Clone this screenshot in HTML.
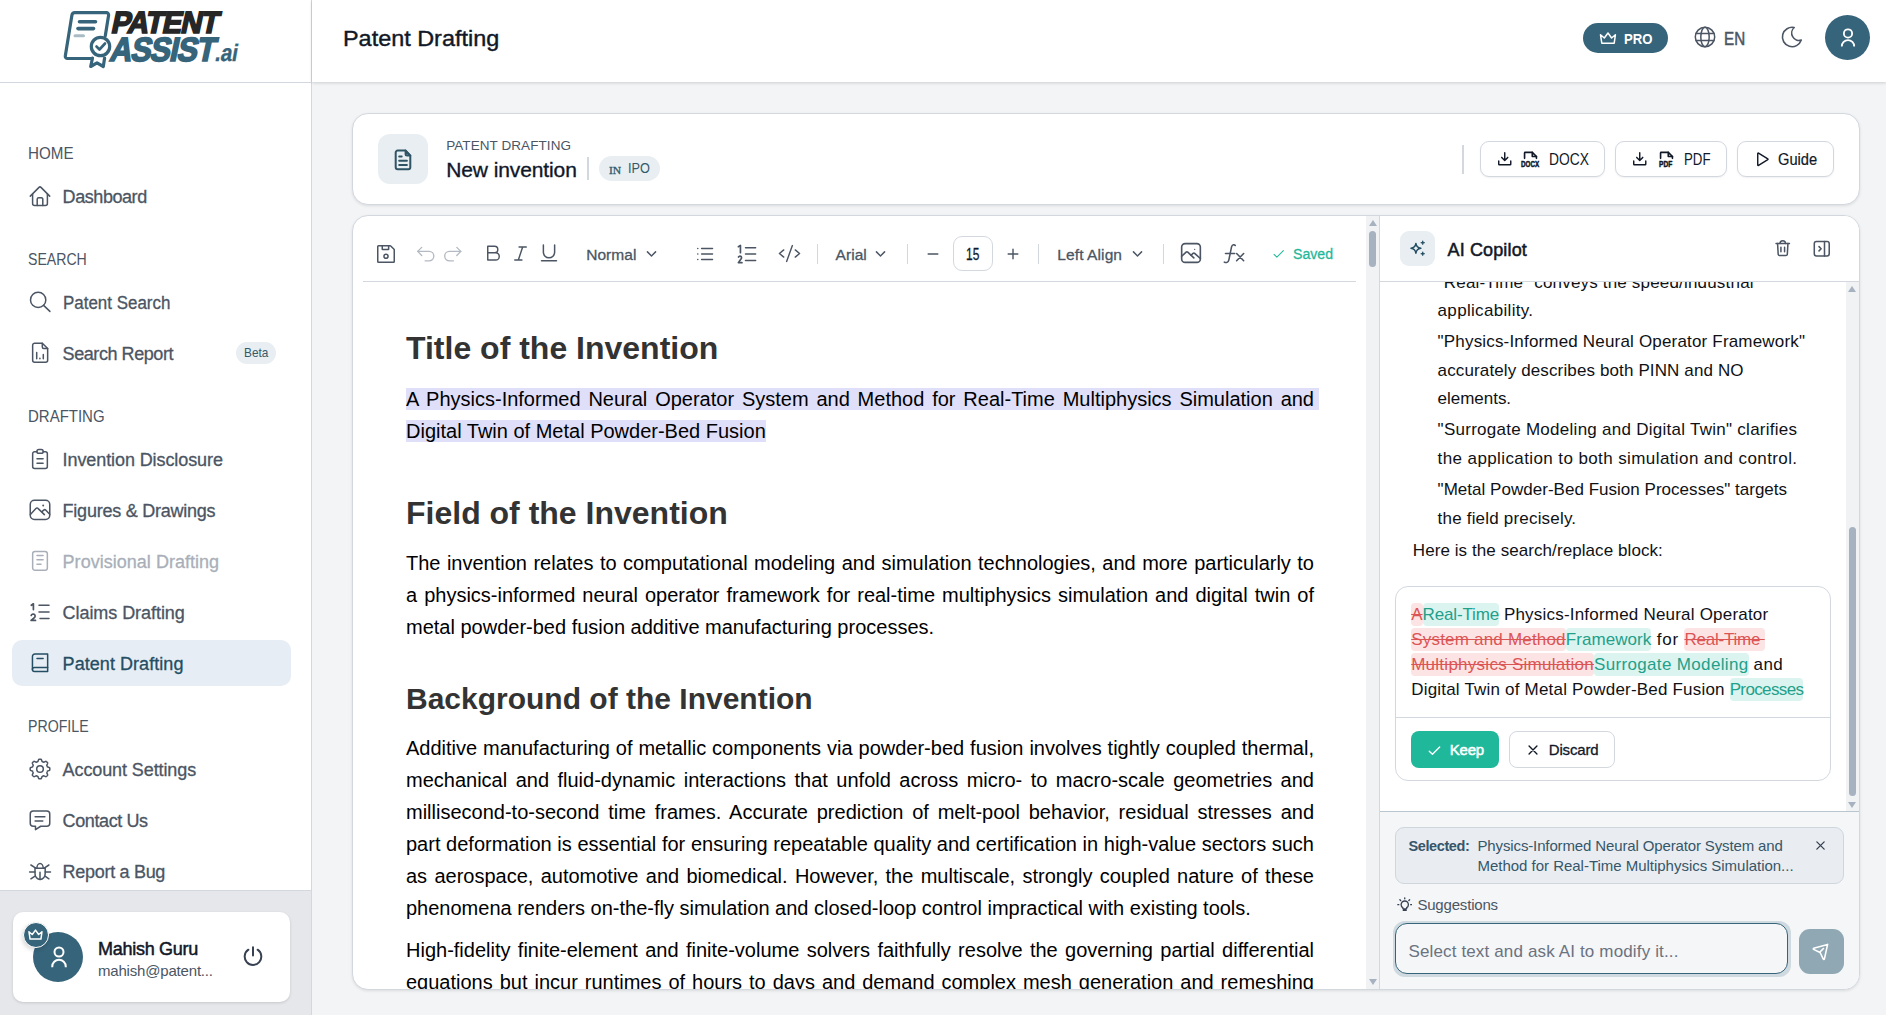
<!DOCTYPE html>
<html><head><meta charset="utf-8">
<style>
*{box-sizing:border-box;margin:0;padding:0}
html,body{width:1886px;height:1015px;overflow:hidden;background:#f3f4f6;font-family:"Liberation Sans",sans-serif;color:#111827}
.abs{position:absolute}
svg{display:block}
.i24{fill:none;stroke:currentColor;stroke-width:1.5;stroke-linecap:round;stroke-linejoin:round}
.ic{fill:none;stroke:currentColor;stroke-width:14;stroke-linecap:round;stroke-linejoin:round}
.t{position:absolute;white-space:nowrap}
.md{-webkit-text-stroke:.3px currentColor}
.sb{-webkit-text-stroke:.5px currentColor}
/* sidebar */
#sb{position:absolute;left:0;top:0;width:312px;height:1015px;background:#fff;border-right:1px solid #d3d8df}
#sbtop{position:absolute;left:0;top:0;width:311px;height:83px;border-bottom:1px solid #d3d8df}
#sbfoot{position:absolute;left:0;top:890px;width:311px;height:125px;background:#e5e7eb;border-top:1px solid #d3d8df}
.sec{position:absolute;left:27.5px;font-size:16.2px;color:#4b5563;line-height:16px;white-space:nowrap}
.nav{position:absolute;left:12px;width:279px;height:46px;border-radius:10px;color:#4b5563;font-size:18px;line-height:46px}
.nav .t{left:50.6px;top:1px;-webkit-text-stroke:.3px currentColor}
.nav svg{position:absolute;left:16px;top:11px;width:24px;height:24px}
.nav.act{background:#e7edf4;color:#244e63}
.nav.dis{color:#a9afb8}
/* header */
#hd{position:absolute;left:312px;top:0;width:1574px;height:82px;background:#fff;box-shadow:0 1px 3px rgba(0,0,0,.16)}
.card{position:absolute;background:#fff;border:1px solid #d3d8df;border-radius:16px;box-shadow:0 1px 3px rgba(0,0,0,.10)}
.btn{position:absolute;height:36px;border:1px solid #d3d8df;border-radius:9px;background:#fff;box-shadow:0 1px 2px rgba(0,0,0,.06)}
.tb{color:#4b5563}
.vd{position:absolute;width:1px;background:#d3d8df}

#doc .h{left:0;width:907px;font-size:32px;line-height:40px;font-weight:bold;color:#333;white-space:nowrap;text-align:left}
#doc .p{left:0;width:908px}
.hl{background:#dfdff9}
.tri{width:0;height:0;border-left:4.500px solid transparent;border-right:4.500px solid transparent;margin-left:.5px}
.tri.up{border-bottom:6px solid #a7b2c1}
.tri.dn{border-top:6px solid #a7b2c1}

.dl{height:25px}
.dl span{display:inline-block;height:23px;line-height:23px;vertical-align:top;margin-top:1px;white-space:pre}
.del{background:#fce4e4;color:#dc5555;text-decoration:line-through;border-radius:4px}
.ins{background:#dcf4ef;color:#22a08a;border-radius:4px}
</style></head><body>
<!--SIDEBAR-->
<div id="sb">
 <div id="sbtop"><svg class="abs" style="left:60px;top:6px" width="190" height="68" viewBox="60 6 190 68">
  <g fill="none" stroke="#36647a" stroke-width="3.2" stroke-linejoin="round" stroke-linecap="round">
   <path d="M91 58.500H67.500a2.200 2.200 0 0 1-2.200-2.600l6.600-40.700a3 3 0 0 1 3-2.500h31.500a2.200 2.200 0 0 1 2.200 2.600l-3.300 20.500"/>
   <circle cx="100.500" cy="46.500" r="9.200"/>
   <path d="M92.500 58l-1.800 8.500 6.300-3.600 6.300 3.600 1.300-8.500"/>
  </g>
  <g fill="none" stroke="#36647a" stroke-linecap="round">
   <path d="M79.500 21.800H95.500" stroke-width="3.600"/><path d="M78 28.600H93.500" stroke-width="3.600"/><path d="M75 35.800H83.500" stroke-width="3" stroke="#a9bcc6"/>
   <path d="M96.500 46.500l3 3 5.500-6" stroke-width="2.600" stroke-linejoin="round"/>
  </g>
  <text x="0" y="0" transform="translate(110.300 33.400) skewX(-12) scale(.95 1)" font-family="Liberation Sans" font-weight="bold" font-size="30.600" fill="#262626" stroke="#262626" stroke-width="1.700" letter-spacing="-1">PATENT</text>
  <text x="0" y="0" transform="translate(108.700 61) skewX(-12) scale(.905 1)" font-family="Liberation Sans" font-weight="bold" font-size="33.600" fill="#36647a" stroke="#36647a" stroke-width="1.700" letter-spacing="-1">ASSIST</text>
  <text x="0" y="0" transform="translate(214.300 61.300) skewX(-10) scale(.86 1)" font-family="Liberation Sans" font-weight="bold" font-size="24" fill="#36647a" stroke="#36647a" stroke-width=".3" letter-spacing="-.3">.ai</text>
</svg></div>
 <div class="sec" style="transform:scaleX(0.9369);transform-origin:0 0;top:145px">HOME</div>
 <div class="sec" style="transform:scaleX(0.8715);transform-origin:0 0;top:251px">SEARCH</div>
 <div class="sec" style="transform:scaleX(0.9259);transform-origin:0 0;top:408px">DRAFTING</div>
 <div class="sec" style="transform:scaleX(0.8749);transform-origin:0 0;top:718px">PROFILE</div>
 <div class="nav" style="top:173px"><svg viewBox="0 0 24 24" class="i24"><path d="M2.300 12.100L11 3.400a1.420 1.420 0 0 1 2 0l8.700 8.700"/><path d="M4.600 10v9.600a2 2 0 0 0 2 2h10.800a2 2 0 0 0 2-2V10"/><path d="M9.200 21.500v-6.300a1.500 1.500 0 0 1 1.500-1.500h2.600a1.500 1.500 0 0 1 1.500 1.500v6.300"/></svg><span class="t" style="letter-spacing:-0.433px;">Dashboard</span></div>
 <div class="nav" style="top:279px"><svg viewBox="0 0 24 24" class="i24"><circle cx="10.150" cy="9.900" r="7.650"/><path d="M15.600 15.350L21.900 21.400"/></svg><span class="t" style="transform:scaleX(0.9415);transform-origin:0 0;">Patent Search</span></div>
 <div class="nav" style="top:330px"><svg viewBox="0 0 24 24" class="i24"><path d="M14.300 2.250H6.650a2 2 0 0 0-2 2v15a2 2 0 0 0 2 2h11a2 2 0 0 0 2-2V7.500z"/><path d="M14.300 2.250v3.750a1.500 1.500 0 0 0 1.500 1.500h3.850"/><path d="M8.700 11.600v6.100M11.900 17.200v.5M15.300 13.500v4.200"/></svg><span class="t" style="letter-spacing:-0.430px;">Search Report</span></div>
 <div class="nav" style="top:436px"><svg viewBox="0 0 24 24" class="i24"><path d="M8.900 4.650H6.650a2 2 0 0 0-2 2v12.800a2 2 0 0 0 2 2h10.700a2 2 0 0 0 2-2V6.650a2 2 0 0 0-2-2H15.200"/><rect x="8.900" y="2.450" width="6.300" height="3.900" rx="1.950"/><path d="M9 11.800h6.100M9 16.300h6.100"/></svg><span class="t" style="letter-spacing:-0.094px;">Invention Disclosure</span></div>
 <div class="nav" style="top:487px"><svg viewBox="0 0 24 24" class="i24"><rect x="2.250" y="2.250" width="19.500" height="19.300" rx="4.200"/><circle cx="15.200" cy="7.500" r=".95" fill="currentColor" stroke="none"/><path d="M2.400 16.400l5.500-5.800a1.600 1.600 0 0 1 2.300 0l6.200 6"/><path d="M14 13.600l1.700-1.500a1.600 1.600 0 0 1 2.200.1l3.800 4"/></svg><span class="t" style="letter-spacing:-0.239px;">Figures &amp; Drawings</span></div>
 <div class="nav dis" style="top:538px"><svg viewBox="0 0 24 24" class="i24"><rect x="4.650" y="2.550" width="14.700" height="18.700" rx="2.300"/><path d="M9 6.400h6.100M9 10.800h6.100M9 15.200h4"/></svg><span class="t" style="letter-spacing:0.022px;">Provisional Drafting</span></div>
 <div class="nav" style="top:589px"><svg viewBox="0 0 24 24" class="i24"><path d="M11 5.300h10M11 12h10M12 18.400h9"/><path d="M3.300 5.300l2.100-1.500v5.800" stroke-width="1.700"/><path d="M3.200 15.500a2 2 0 1 1 3.500 1.800L3.100 20.400h4.400" stroke-width="1.700"/></svg><span class="t" style="letter-spacing:-0.059px;">Claims Drafting</span></div>
 <div class="nav act" style="top:640px"><svg viewBox="0 0 24 24" class="i24"><path d="M19.650 16.400V3.050H6.850a2.400 2.400 0 0 0-2.400 2.400v12.950"/><path d="M19.650 16.400H6.450a2 2 0 0 0 0 4.050h13.200z"/><path d="M9 7.600h6.100"/></svg><span class="t" style="letter-spacing:0.052px;">Patent Drafting</span></div>
 <div class="nav" style="top:746px"><svg viewBox="0 0 24 24" class="i24"><circle cx="12" cy="12" r="3.300"/><path d="M21.80 12.00 L21.80 12.26 L21.79 12.51 L21.77 12.77 L21.75 13.02 L21.56 13.26 L21.19 13.46 L20.79 13.63 L20.38 13.78 L19.97 13.91 L19.59 14.03 L19.38 14.19 L19.32 14.38 L19.26 14.57 L19.19 14.76 L19.11 14.95 L19.03 15.13 L18.95 15.31 L18.86 15.50 L18.77 15.67 L18.80 15.93 L18.99 16.28 L19.18 16.66 L19.36 17.06 L19.53 17.47 L19.65 17.87 L19.62 18.17 L19.45 18.36 L19.28 18.56 L19.11 18.75 L18.93 18.93 L18.75 19.11 L18.56 19.28 L18.36 19.45 L18.17 19.62 L17.87 19.65 L17.47 19.53 L17.06 19.36 L16.66 19.18 L16.28 18.99 L15.93 18.80 L15.67 18.77 L15.50 18.86 L15.31 18.95 L15.13 19.03 L14.95 19.11 L14.76 19.19 L14.57 19.26 L14.38 19.32 L14.19 19.38 L14.03 19.59 L13.91 19.97 L13.78 20.38 L13.63 20.79 L13.46 21.19 L13.26 21.56 L13.02 21.75 L12.77 21.77 L12.51 21.79 L12.26 21.80 L12.00 21.80 L11.74 21.80 L11.49 21.79 L11.23 21.77 L10.98 21.75 L10.74 21.56 L10.54 21.19 L10.37 20.79 L10.22 20.38 L10.09 19.97 L9.97 19.59 L9.81 19.38 L9.62 19.32 L9.43 19.26 L9.24 19.19 L9.05 19.11 L8.87 19.03 L8.69 18.95 L8.50 18.86 L8.33 18.77 L8.07 18.80 L7.72 18.99 L7.34 19.18 L6.94 19.36 L6.53 19.53 L6.13 19.65 L5.83 19.62 L5.64 19.45 L5.44 19.28 L5.25 19.11 L5.07 18.93 L4.89 18.75 L4.72 18.56 L4.55 18.36 L4.38 18.17 L4.35 17.87 L4.47 17.47 L4.64 17.06 L4.82 16.66 L5.01 16.28 L5.20 15.93 L5.23 15.67 L5.14 15.50 L5.05 15.31 L4.97 15.13 L4.89 14.95 L4.81 14.76 L4.74 14.57 L4.68 14.38 L4.62 14.19 L4.41 14.03 L4.03 13.91 L3.62 13.78 L3.21 13.63 L2.81 13.46 L2.44 13.26 L2.25 13.02 L2.23 12.77 L2.21 12.51 L2.20 12.26 L2.20 12.00 L2.20 11.74 L2.21 11.49 L2.23 11.23 L2.25 10.98 L2.44 10.74 L2.81 10.54 L3.21 10.37 L3.62 10.22 L4.03 10.09 L4.41 9.97 L4.62 9.81 L4.68 9.62 L4.74 9.43 L4.81 9.24 L4.89 9.05 L4.97 8.87 L5.05 8.69 L5.14 8.50 L5.23 8.33 L5.20 8.07 L5.01 7.72 L4.82 7.34 L4.64 6.94 L4.47 6.53 L4.35 6.13 L4.38 5.83 L4.55 5.64 L4.72 5.44 L4.89 5.25 L5.07 5.07 L5.25 4.89 L5.44 4.72 L5.64 4.55 L5.83 4.38 L6.13 4.35 L6.53 4.47 L6.94 4.64 L7.34 4.82 L7.72 5.01 L8.07 5.20 L8.33 5.23 L8.50 5.14 L8.69 5.05 L8.87 4.97 L9.05 4.89 L9.24 4.81 L9.43 4.74 L9.62 4.68 L9.81 4.62 L9.97 4.41 L10.09 4.03 L10.22 3.62 L10.37 3.21 L10.54 2.81 L10.74 2.44 L10.98 2.25 L11.23 2.23 L11.49 2.21 L11.74 2.20 L12.00 2.20 L12.26 2.20 L12.51 2.21 L12.77 2.23 L13.02 2.25 L13.26 2.44 L13.46 2.81 L13.63 3.21 L13.78 3.62 L13.91 4.03 L14.03 4.41 L14.19 4.62 L14.38 4.68 L14.57 4.74 L14.76 4.81 L14.95 4.89 L15.13 4.97 L15.31 5.05 L15.50 5.14 L15.67 5.23 L15.93 5.20 L16.28 5.01 L16.66 4.82 L17.06 4.64 L17.47 4.47 L17.87 4.35 L18.17 4.38 L18.36 4.55 L18.56 4.72 L18.75 4.89 L18.93 5.07 L19.11 5.25 L19.28 5.44 L19.45 5.64 L19.62 5.83 L19.65 6.13 L19.53 6.53 L19.36 6.94 L19.18 7.34 L18.99 7.72 L18.80 8.07 L18.77 8.33 L18.86 8.50 L18.95 8.69 L19.03 8.87 L19.11 9.05 L19.19 9.24 L19.26 9.43 L19.32 9.62 L19.38 9.81 L19.59 9.97 L19.97 10.09 L20.38 10.22 L20.79 10.37 L21.19 10.54 L21.56 10.74 L21.75 10.98 L21.77 11.23 L21.79 11.49 L21.80 11.74z"/></svg><span class="t" style="letter-spacing:-0.100px;">Account Settings</span></div>
 <div class="nav" style="top:797px"><svg viewBox="0 0 24 24" class="i24"><path d="M7.500 18.250H5.250a3 3 0 0 1-3-3V6.050a3 3 0 0 1 3-3h13.500a3 3 0 0 1 3 3v9.200a3 3 0 0 1-3 3H12.700l-5.200 3.400z"/><path d="M7.100 8.700h9.800M7.100 12.900h7.700"/></svg><span class="t" style="letter-spacing:-0.394px;">Contact Us</span></div>
 <div class="nav" style="top:848px"><svg viewBox="0 0 24 24" class="i24"><g transform="translate(0 1)"><path d="M7 8.200h10.200v5.400a5.100 6 0 0 1-10.200 0z"/><path d="M8.900 8.200a3.150 4.600 0 0 1 6.300 0"/><path d="M1.600 11.900H7M17.200 11.900h5.300M2.900 5l4.500 2.800M20.900 5l-4.300 2.800M2.900 18.800l3.700-2.400M20.900 18.800l-3.500-2.400M12 12.300v7.200"/></g></svg><span class="t" style="letter-spacing:-0.298px;">Report a Bug</span></div>
 <div class="abs" style="left:236px;top:342px;width:40px;height:22px;border-radius:11px;background:#e8eef1;color:#35596b;font-size:13px;line-height:22px"><span class="t" style="transform:scaleX(0.9084);transform-origin:0 0;left:7.8px">Beta</span></div>
 <div id="sbfoot">
  <div class="abs" style="left:13px;top:21px;width:277px;height:90px;background:#fff;border-radius:10px;box-shadow:0 1px 3px rgba(0,0,0,.14)"></div>
  <div class="abs" style="left:33px;top:41px;width:50px;height:50px;border-radius:25px;background:#36647a;color:#fff"><svg viewBox="0 0 24 24" class="i24" style="position:absolute;left:13.500px;top:13.400px;width:24px;height:24px;stroke-width:2;stroke-linecap:butt"><circle cx="12" cy="7" r="4.500"/><path d="M5.250 22.200v-.650a6.750 6.750 0 0 1 13.500 0v.650"/></svg></div>
  <div class="abs" style="left:22.500px;top:30.500px;width:26px;height:26px;border-radius:13px;background:#36647a;border:1.500px solid #fff;color:#fff;box-shadow:-1px 2px 4px rgba(0,0,0,.15)"><svg viewBox="0 0 24 24" class="i24" style="position:absolute;left:1.250px;top:1px;width:21px;height:21px;stroke-width:1.7"><path d="M4.500 8.800L8.300 12 12 7l3.600 5 3.800-3.200-1.200 8.400H5.800z"/></svg></div>
  <div class="t sb" style="letter-spacing:-0.275px;left:98px;top:47px;font-size:18px;line-height:22px;color:#111827">Mahish Guru</div>
  <div class="t" style="letter-spacing:-0.186px;left:98px;top:71px;font-size:15px;line-height:18px;color:#4b5563">mahish@patent...</div>
  <div class="abs" style="left:240.700px;top:53.100px;width:24px;height:24px;color:#374151"><svg viewBox="0 0 24 24" class="i24" style="width:24px;height:24px;stroke-width:2"><path d="M12 3.200v8.300"/><path d="M7.400 5.700a8.300 8.300 0 1 0 9.200 0"/></svg></div>
 </div>
</div>
<!--HEADER-->
<div id="hd">
 <div class="t" style="transform:scaleX(1.0644);transform-origin:0 0;left:30.5px;top:24.600px;font-size:22px;line-height:28px;color:#111827;-webkit-text-stroke:.4px currentColor">Patent Drafting</div>
 <div class="abs" style="left:1271px;top:23px;width:85px;height:30px;border-radius:15px;background:#36647a;color:#fff">
  <svg viewBox="0 0 24 24" class="i24" style="position:absolute;left:13px;top:3px;width:24px;height:24px;stroke-width:1.5"><path d="M4.500 8.800L8.300 12 12 7l3.600 5 3.800-3.200-1.200 8.400H5.800z"/></svg>
  <span class="t" style="transform:scaleX(0.8484);transform-origin:0 0;left:40.9px;top:6px;font-size:15.500px;line-height:19px;font-weight:bold">PRO</span>
 </div>
 <div class="abs" style="left:1381.400px;top:25.400px;width:24px;height:24px;color:#4b5563"><svg viewBox="0 0 24 24" class="i24" style="width:24px;height:24px"><circle cx="12" cy="12" r="9.700"/><ellipse cx="12" cy="12" rx="4.200" ry="9.700"/><path d="M3.200 8.500h17.600M3.200 15.500h17.600"/></svg></div>
 <div class="t sb" style="transform:scaleX(0.8435);transform-origin:0 0;left:1411.5px;top:28px;font-size:18px;line-height:22px;color:#4b5563">EN</div>
 <div class="abs" style="left:1468px;top:25.400px;width:24px;height:24px;color:#4b5563"><svg viewBox="0 0 24 24" class="i24" style="width:24px;height:24px;stroke-width:1.6"><path d="M14.200 2.500A9.700 9.700 0 1 0 21.300 15.100A7.400 7.400 0 0 1 14.200 2.500z"/></svg></div>
 <div class="abs" style="left:1512.5px;top:15px;width:45px;height:45px;border-radius:23px;background:#36647a;color:#fff"><svg viewBox="0 0 24 24" class="i24" style="position:absolute;left:12.200px;top:11.600px;width:22px;height:22px;stroke-width:2;stroke-linecap:butt"><circle cx="12" cy="7" r="4.500"/><path d="M5.250 21.400v-.400a6.750 6.750 0 0 1 13.500 0v.400"/></svg></div>
</div>
<!--CARD1-->
<div class="card" id="c1" style="left:352px;top:113px;width:1508px;height:92px">
 <div class="abs" style="left:25px;top:20px;width:50px;height:50px;border-radius:12px;background:#e8eef1;color:#2f5466"><svg viewBox="0 0 24 24" class="i24" style="position:absolute;left:13.400px;top:13.500px;width:24px;height:24px;stroke-width:2"><path d="M14.600 2.600H6.700a2 2 0 0 0-2 2v14.700a2 2 0 0 0 2 2h10.600a2 2 0 0 0 2-2V7.600z"/><path d="M14.600 2.600v3.500a1.500 1.500 0 0 0 1.500 1.500h3.200z" fill="currentColor" fill-opacity=".3"/><path d="M8.200 8.500h2.500M8.200 12.700h7.700M8.200 16.900h7.700"/></svg></div>
 <div class="t" style="letter-spacing:0.074px;left:93.2px;top:24px;font-size:13.5px;line-height:16px;color:#4b5563">PATENT DRAFTING</div>
 <div class="t" style="letter-spacing:-0.101px;left:93.2px;top:43px;font-size:21px;line-height:26px;color:#0f172a;-webkit-text-stroke:.35px currentColor">New invention</div>
 <div class="abs" style="left:234px;top:43px;width:2px;height:23px;background:#d3d8df"></div>
 <div class="abs" style="left:246px;top:42px;width:61px;height:25px;border-radius:13px;background:#e8eef1;color:#35596b">
  <span class="t" style="transform:scaleX(1.0696);transform-origin:0 0;left:10.2px;top:8.500px;font-family:'Liberation Serif',serif;font-size:10.800px;line-height:11px;-webkit-text-stroke:.3px currentColor">IN</span>
  <span class="t" style="transform:scaleX(0.9078);transform-origin:0 0;left:28.6px;top:4px;font-size:14px;line-height:17px">IPO</span>
 </div>
 <div class="abs" style="left:1108.500px;top:31px;width:2px;height:29px;background:#d3d8df"></div>
 <div class="btn" style="left:1126.5px;top:27.200px;width:125px">
  <svg viewBox="0 0 256 256" class="ic" style="position:absolute;left:15.500px;top:8px;width:17.500px;height:17.500px;stroke-width:21"><path d="M128 40v112M84 108l44 44 44-44M40 160v48a8 8 0 0 0 8 8h160a8 8 0 0 0 8-8v-48"/></svg>
  <svg viewBox="0 0 256 256" class="ic" style="position:absolute;left:40.500px;top:7.500px;width:19px;height:19px;stroke-width:22"><path d="M48 112V40a8 8 0 0 1 8-8h96l56 56v24"/><path d="M152 32v56h56"/></svg>
  <span class="t" style="left:40.300px;top:18.300px;font-size:8.500px;line-height:9px;font-weight:bold;transform:scaleX(.74);transform-origin:0 0;-webkit-text-stroke:.5px #111827">DOCX</span>
  <span class="t" style="transform:scaleX(0.8630);transform-origin:0 0;left:68px;top:8.300px;font-size:16px;line-height:19px">DOCX</span>
 </div>
 <div class="btn" style="left:1261.5px;top:27.200px;width:112px">
  <svg viewBox="0 0 256 256" class="ic" style="position:absolute;left:15.500px;top:8px;width:17.500px;height:17.500px;stroke-width:21"><path d="M128 40v112M84 108l44 44 44-44M40 160v48a8 8 0 0 0 8 8h160a8 8 0 0 0 8-8v-48"/></svg>
  <svg viewBox="0 0 256 256" class="ic" style="position:absolute;left:41px;top:7.500px;width:19px;height:19px;stroke-width:22"><path d="M48 112V40a8 8 0 0 1 8-8h96l56 56v24"/><path d="M152 32v56h56"/></svg>
  <span class="t" style="left:43px;top:18.300px;font-size:8.500px;line-height:9px;font-weight:bold;transform:scaleX(.78);transform-origin:0 0;-webkit-text-stroke:.5px #111827">PDF</span>
  <span class="t" style="transform:scaleX(0.8281);transform-origin:0 0;left:68.800px;top:8.300px;font-size:16px;line-height:19px">PDF</span>
 </div>
 <div class="btn" style="left:1383.5px;top:27.200px;width:97px">
  <svg viewBox="0 0 256 256" class="ic" style="position:absolute;left:16px;top:8.500px;width:16.500px;height:16.500px;stroke-width:22"><path d="M72 39.900v176.200a8 8 0 0 0 12.200 6.800l144-88.100a8 8 0 0 0 0-13.600l-144-88.100A8 8 0 0 0 72 39.900z" transform="translate(-14 0)"/></svg>
  <span class="t" style="transform:scaleX(0.9156);transform-origin:0 0;left:40.900px;top:8.300px;font-size:16px;line-height:19px;-webkit-text-stroke:.2px currentColor">Guide</span>
 </div>
</div>
<!--CARD2-->
<div class="card" id="c2" style="left:352px;top:215px;width:1508px;height:775px;overflow:hidden">
<!--EDITOR (coords relative to card inner origin 353,216)-->
<div class="abs tb" id="tbar" style="left:0;top:0;width:1013px;height:66px">
 <div class="abs" style="left:10px;top:65px;width:993px;height:1px;background:#d3d8df"></div>
 <svg viewBox="0 0 256 256" class="ic" style="position:absolute;left:20.500px;top:25.500px;width:24px;height:24px;stroke-width:16"><path d="M216 83.300V208a8 8 0 0 1-8 8H48a8 8 0 0 1-8-8V48a8 8 0 0 1 8-8h124.700a8 8 0 0 1 5.600 2.300l35.400 35.400a8 8 0 0 1 2.300 5.600z"/><circle cx="128" cy="152" r="22"/><path d="M88 40v36a4 4 0 0 0 4 4h60a4 4 0 0 0 4-4V40"/></svg>
 <svg viewBox="0 0 256 256" class="ic" style="position:absolute;left:61.500px;top:27.500px;width:21.500px;height:21.500px;stroke-width:16;color:#b4bac3"><path d="M80 136L32 88l48-48"/><path d="M120 200h48a56 56 0 0 0 0-112H32"/></svg>
 <svg viewBox="0 0 256 256" class="ic" style="position:absolute;left:88.500px;top:27.500px;width:21.500px;height:21.500px;stroke-width:16;color:#b4bac3"><path d="M176 136l48-48-48-48"/><path d="M136 200H88a56 56 0 0 1 0-112h136"/></svg>
 <svg viewBox="0 0 256 256" class="ic" style="position:absolute;left:128.500px;top:25.500px;width:23px;height:23px;stroke-width:16"><path d="M64 120h88a40 40 0 0 1 0 80H64V48h76a36 36 0 0 1 0 72"/></svg>
 <svg viewBox="0 0 256 256" class="ic" style="position:absolute;left:156px;top:25.500px;width:23px;height:23px;stroke-width:16"><path d="M152 56L104 200M64 200h80M112 56h80"/></svg>
 <svg viewBox="0 0 256 256" class="ic" style="position:absolute;left:183.500px;top:24px;width:24px;height:24px;stroke-width:16"><path d="M48 220h160M188 52v78a60 60 0 0 1-120 0V52"/></svg>
 <span class="t md" style="letter-spacing:0.049px;left:233.2px;top:29.300px;font-size:15.500px;line-height:19px">Normal</span>
 <svg viewBox="0 0 256 256" class="ic" style="position:absolute;left:291.500px;top:31px;width:13px;height:13px;stroke-width:28"><path d="M208 96l-80 80-80-80"/></svg>
 <svg viewBox="0 0 256 256" class="ic" style="position:absolute;left:341px;top:26.500px;width:22px;height:22px;stroke-width:16"><path d="M88 64h128M88 128h128M88 192h128"/><circle cx="44" cy="64" r="9" fill="currentColor" stroke="none"/><circle cx="44" cy="128" r="9" fill="currentColor" stroke="none"/><circle cx="44" cy="192" r="9" fill="currentColor" stroke="none"/></svg>
 <svg viewBox="0 0 256 256" class="ic" style="position:absolute;left:381.500px;top:25.500px;width:24px;height:24px;stroke-width:16"><path d="M112 128h108M112 60h108M112 196h108"/><path d="M36 50l22-14v78" stroke-width="18"/><path d="M37.500 160a17 17 0 1 1 30 16L36 220h38" stroke-width="18"/></svg>
 <svg viewBox="0 0 256 256" class="ic" style="position:absolute;left:425px;top:26px;width:23px;height:23px;stroke-width:16"><path d="M64 88l-48 40 48 40M192 88l48 40-48 40M160 40L96 216"/></svg>
 <div class="vd" style="left:463.500px;top:28px;height:20px"></div>
 <span class="t md" style="letter-spacing:0.046px;left:482.6px;top:29.300px;font-size:15.500px;line-height:19px">Arial</span>
 <svg viewBox="0 0 256 256" class="ic" style="position:absolute;left:521px;top:31px;width:13px;height:13px;stroke-width:28"><path d="M208 96l-80 80-80-80"/></svg>
 <div class="vd" style="left:553.500px;top:28px;height:20px"></div>
 <svg viewBox="0 0 256 256" class="ic" style="position:absolute;left:572.500px;top:30.500px;width:14px;height:14px;stroke-width:26"><path d="M40 128h176"/></svg>
 <div class="abs" style="left:600px;top:20px;width:40px;height:35px;border:1px solid #d3d8df;border-radius:9px"></div>
 <span class="t md" style="transform:scaleX(0.7244);transform-origin:0 0;left:613px;top:28.500px;font-size:16.500px;line-height:19px;color:#111827">15</span>
 <svg viewBox="0 0 256 256" class="ic" style="position:absolute;left:652.500px;top:30.500px;width:14px;height:14px;stroke-width:26"><path d="M40 128h176M128 40v176"/></svg>
 <div class="vd" style="left:684.500px;top:28px;height:20px"></div>
 <span class="t md" style="letter-spacing:0.102px;left:704.3px;top:29.300px;font-size:15.500px;line-height:19px">Left Align</span>
 <svg viewBox="0 0 256 256" class="ic" style="position:absolute;left:777.500px;top:31px;width:13px;height:13px;stroke-width:28"><path d="M208 96l-80 80-80-80"/></svg>
 <div class="vd" style="left:809.500px;top:28px;height:20px"></div>
 <svg viewBox="0 0 256 256" class="ic" style="position:absolute;left:825px;top:24px;width:26px;height:26px;stroke-width:16"><rect x="36" y="36" width="184" height="184" rx="34"/><circle cx="164" cy="92" r="7" fill="currentColor" stroke="none"/><path d="M36 160l44-40a12 12 0 0 1 16 0l60 56"/><path d="M128 150l20-18a12 12 0 0 1 16 0l56 50"/></svg>
 <svg viewBox="0 0 256 256" class="ic" style="position:absolute;left:868px;top:25px;width:25px;height:25px;stroke-width:16"><path d="M146 46c-8-12-32-12-38 14L80 196c-5 24-28 30-46 20"/><path d="M46 128h94"/><path d="M160 128l72 74M232 128l-72 74"/></svg>
 <svg viewBox="0 0 256 256" class="ic" style="position:absolute;left:918.500px;top:30.500px;width:13px;height:13px;stroke-width:20;color:#1fb89a"><path d="M40 144l56 56L224 72"/></svg>
 <span class="t md" style="transform:scaleX(0.9101);transform-origin:0 0;left:939.7px;top:28.300px;font-size:15.500px;line-height:19px;color:#1fb89a">Saved</span>
</div>
<div class="abs" id="doc" style="left:53px;top:0;width:907px;color:#000;font-size:20px;line-height:32px;text-align:justify">
 <div class="abs h" style="top:112px">Title of the Invention</div>
 <div class="abs" style="left:907px;top:172px;width:5.500px;height:22px;background:#dfdff9"></div>
 <div class="abs p" style="top:167px"><span class="hl">A Physics-Informed Neural Operator System and Method for Real-Time Multiphysics Simulation and Digital Twin of Metal Powder-Bed Fusion</span></div>
 <div class="abs h" style="top:277px">Field of the Invention</div>
 <div class="abs p" style="top:331px">The invention relates to computational modeling and simulation technologies, and more particularly to a physics-informed neural operator framework for real-time multiphysics simulation and digital twin of metal powder-bed fusion additive manufacturing processes.</div>
 <div class="abs h" style="top:463px;font-size:30px">Background of the Invention</div>
 <div class="abs p" style="top:516px">Additive manufacturing of metallic components via powder-bed fusion involves tightly coupled thermal, mechanical and fluid-dynamic interactions that unfold across micro- to macro-scale geometries and millisecond-to-second time frames. Accurate prediction of melt-pool behavior, residual stresses and part deformation is essential for ensuring repeatable quality and certification in high-value sectors such as aerospace, automotive and biomedical. However, the multiscale, strongly coupled nature of these phenomena renders on-the-fly simulation and closed-loop control impractical with existing tools.</div>
 <div class="abs p" style="top:718px">High-fidelity finite-element and finite-volume solvers faithfully resolve the governing partial differential equations but incur runtimes of hours to days and demand complex mesh generation and remeshing strategies for evolving geometries.</div>
</div>
<!--editor scrollbar-->
<div class="abs" style="left:1013px;top:0;width:13px;height:773px;background:#f1f2f4"></div>
<div class="abs" style="left:1016px;top:15px;width:7px;height:36px;border-radius:4px;background:#a7b2c1"></div>
<div class="abs tri up" style="left:1015px;top:4px"></div>
<div class="abs tri dn" style="left:1015px;top:763px"></div>
<div class="abs" style="left:1026px;top:0;width:1px;height:773px;background:#d3d8df"></div>
<!--COPILOT-->
<div class="abs" id="cp" style="left:1027px;top:0;width:479px;height:773px">
 <!--chat (white) : y 66..595 -->
 <div class="abs" id="chat" style="left:0;top:66px;width:479px;height:530px;overflow:hidden;color:#0f1115;font-size:17px;line-height:28.5px">
  <div class="t" style="letter-spacing:0.177px;left:57.6px;top:-13.200px">"Real-Time" conveys the speed/industrial</div>
  <div class="t" style="letter-spacing:0.320px;left:57.6px;top:15.300px">applicability.</div>
  <div class="t" style="letter-spacing:0.178px;left:57.6px;top:46.300px">"Physics-Informed Neural Operator Framework"</div>
  <div class="t" style="letter-spacing:0.127px;left:57.6px;top:74.800px">accurately describes both PINN and NO</div>
  <div class="t" style="letter-spacing:-0.025px;left:57.6px;top:103.300px">elements.</div>
  <div class="t" style="letter-spacing:0.267px;left:57.6px;top:134.300px">"Surrogate Modeling and Digital Twin" clarifies</div>
  <div class="t" style="letter-spacing:0.398px;left:57.6px;top:162.800px">the application to both simulation and control.</div>
  <div class="t" style="letter-spacing:0.025px;left:57.6px;top:193.800px">"Metal Powder-Bed Fusion Processes" targets</div>
  <div class="t" style="letter-spacing:0.194px;left:57.6px;top:222.800px">the field precisely.</div>
  <div class="t" style="letter-spacing:0.076px;left:32.8px;top:254.800px">Here is the search/replace block:</div>
  <!--diff card: abs page x1395..1831,y586..781 -> rel x15..451,y304..499 -->
  <div class="abs" style="left:15px;top:304px;width:436px;height:195px;border:1px solid #d3d8df;border-radius:13px;background:#fff"></div>
  <div class="abs" style="left:16px;top:435px;width:434px;height:1px;background:#d3d8df"></div>
  <div class="abs" id="diff" style="left:31.2px;top:320px;width:430px;font-size:17px;line-height:25px;white-space:nowrap">
   <div class="dl"><span class="del" style="letter-spacing:0.000px;">A</span><span class="ins" style="letter-spacing:-0.148px;">Real-Time</span><span style="letter-spacing:0.204px;"> Physics-Informed Neural Operator</span></div>
   <div class="dl"><span class="del" style="letter-spacing:0.200px;">System and Method</span><span class="ins" style="letter-spacing:0.048px;">Framework</span><span style="letter-spacing:0.776px;"> for </span><span class="del" style="letter-spacing:-0.222px;">Real-Time </span></div>
   <div class="dl"><span class="del" style="letter-spacing:0.264px;">Multiphysics Simulation</span><span class="ins" style="letter-spacing:0.349px;">Surrogate Modeling</span><span style="letter-spacing:0.302px;"> and</span></div>
   <div class="dl"><span style="letter-spacing:0.198px;">Digital Twin of Metal Powder-Bed Fusion </span><span class="ins" style="letter-spacing:-0.622px;">Processes</span></div>
  </div>
  <div class="abs" style="left:30.500px;top:449px;width:88.500px;height:37px;border-radius:8px;background:#1fb89a;color:#fff">
   <svg viewBox="0 0 256 256" class="ic" style="position:absolute;left:16.500px;top:11.500px;width:14.500px;height:14.500px;stroke-width:24"><path d="M40 144l56 56L224 72"/></svg>
   <span class="t sb" style="letter-spacing:-0.182px;left:39.2px;top:9.500px;font-size:15px;line-height:18px">Keep</span>
  </div>
  <div class="abs" style="left:129px;top:449px;width:106px;height:37px;border-radius:8px;background:#fff;border:1px solid #d3d8df;color:#111827">
   <svg viewBox="0 0 256 256" class="ic" style="position:absolute;left:16px;top:10.500px;width:14px;height:14px;stroke-width:25"><path d="M200 56L56 200M200 200L56 56"/></svg>
   <span class="t md" style="letter-spacing:-0.177px;left:38.800px;top:8.500px;font-size:15px;line-height:18px">Discard</span>
  </div>
 </div>
 <!--chat scrollbar-->
 <div class="abs" style="left:466px;top:66px;width:13px;height:530px;background:#f1f2f4"></div>
 <div class="abs" style="left:469px;top:311px;width:7px;height:269px;border-radius:4px;background:#a7b2c1"></div>
 <div class="abs tri up" style="left:467.500px;top:70px"></div>
 <div class="abs tri dn" style="left:467.500px;top:586px"></div>
 <!--header-->
 <div class="abs" style="left:0;top:0;width:479px;height:66px;background:#fff;border-bottom:1px solid #d3d8df">
  <div class="abs" style="left:19.500px;top:15px;width:35.500px;height:34.500px;border-radius:9px;background:#e8eef1;color:#244e63"><svg class="abs" style="left:0;top:0" width="36" height="35" viewBox="0 0 36 35"><g fill="currentColor" stroke="currentColor" stroke-width=".9" stroke-linejoin="round"><path d="M15.900 12.400c.5 3.300 1.600 4.400 4.900 4.900-3.300.5-4.400 1.600-4.900 4.900-.5-3.300-1.600-4.400-4.900-4.900 3.300-.5 4.400-1.600 4.900-4.900z" fill="none" stroke-width="1.500"/><path d="M22.700 9.800c.2 1.300.6 1.700 1.900 1.900-1.300.2-1.700.6-1.900 1.900-.2-1.300-.6-1.700-1.900-1.900 1.300-.2 1.700-.6 1.900-1.900z"/><path d="M22.700 20.800c.2 1.300.6 1.700 1.900 1.900-1.300.2-1.700.6-1.900 1.900-.2-1.300-.6-1.700-1.900-1.900 1.300-.2 1.700-.6 1.900-1.900z"/></g></svg></div>
  <span class="t sb" style="letter-spacing:0.139px;left:67.500px;top:23.200px;font-size:18px;line-height:22px;color:#111827">AI Copilot</span>
  <svg viewBox="0 0 256 256" class="ic" style="position:absolute;left:392.500px;top:23px;width:19.500px;height:19.500px;stroke-width:20;color:#4b5563"><path d="M216 60H40M104 108v60M152 108v60"/><path d="M196 60l-8 140a20 20 0 0 1-20 18H88a20 20 0 0 1-20-18L60 60"/><path d="M92 60c0-24 12-36 36-36s36 12 36 36"/></svg>
  <svg viewBox="0 0 256 256" class="ic" style="position:absolute;left:432px;top:23px;width:19.500px;height:19.500px;stroke-width:20;color:#4b5563"><rect x="30" y="34" width="196" height="188" rx="28"/><path d="M164 34v188"/><path d="M92 100l28 28-28 28"/></svg>
 </div>
 <!--footer y 596..774-->
 <div class="abs" style="left:0;top:595px;width:479px;height:178px;background:#f4f6f8;border-top:1px solid #b9c5cf">
  <div class="abs" style="left:15px;top:15px;width:449px;height:57px;border:1px solid #cfd6de;border-radius:9px;background:#e9edf1"></div>
  <span class="t" style="letter-spacing:-0.373px;left:28.400px;top:25px;font-size:14.500px;line-height:18px;font-weight:bold;color:#36566a">Selected:</span>
  <span class="t" style="letter-spacing:-0.133px;left:97.500px;top:25px;font-size:15px;line-height:18px;color:#36566a">Physics-Informed Neural Operator System and</span>
  <span class="t" style="letter-spacing:-0.021px;left:97.500px;top:45px;font-size:15px;line-height:18px;color:#36566a">Method for Real-Time Multiphysics Simulation...</span>
  <svg viewBox="0 0 256 256" class="ic" style="position:absolute;left:433.500px;top:27px;width:13px;height:13px;stroke-width:26;color:#374151"><path d="M200 56L56 200M200 200L56 56"/></svg>
  <svg viewBox="0 0 256 256" class="ic" style="position:absolute;left:16.500px;top:84.500px;width:15.500px;height:15.500px;color:#374151"><path d="M104 222h48M96 176c-18-12-28-30-28-50a60 60 0 0 1 120 0c0 20-10 38-28 50v14a8 8 0 0 1-8 8h-48a8 8 0 0 1-8-8z" stroke-width="22"/><path d="M128 30V14M60 58L48 46M196 58l12-12M30 126H14M242 126h-16" stroke-width="22"/></svg>
  <span class="t" style="letter-spacing:-0.186px;left:37.400px;top:83.700px;font-size:15px;line-height:18px;color:#4b5563">Suggestions</span>
  <div class="abs" style="left:12.500px;top:108.500px;width:398px;height:56px;border-radius:12px;background:#cfdae0"></div>
  <div class="abs" style="left:15px;top:111.400px;width:393px;height:51px;border-radius:12px;border:1.500px solid #36647a;background:#f4f6f8"></div>
  <span class="t" style="letter-spacing:0.147px;left:28.400px;top:129.200px;font-size:17px;line-height:22px;color:#6b7280">Select text and ask AI to modify it...</span>
  <div class="abs" style="left:418.500px;top:117px;width:45.500px;height:44.500px;border-radius:11px;background:#8fa8b4;color:#fff"><svg viewBox="0 0 256 256" class="ic" style="position:absolute;left:12.500px;top:12.500px;width:19px;height:19px;stroke-width:21"><path d="M223.900 32.100L36 85a8 8 0 0 0-1.300 14.900l86.200 40.800a7.900 7.900 0 0 1 3.800 3.800l40.800 86.200a8 8 0 0 0 14.900-1.300z"/><path d="M122.700 133.300L168 88"/></svg></div>
 </div>
</div>
</div>
</body></html>
